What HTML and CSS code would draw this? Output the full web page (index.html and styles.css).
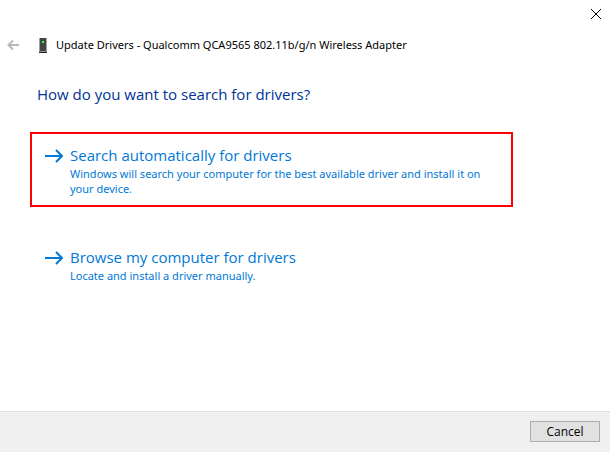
FILE: index.html
```html
<!DOCTYPE html>
<html lang="en">
<head>
    <meta charset="UTF-8">
    <meta name="viewport" content="width=device-width, initial-scale=1.0">
    <title>Update Drivers</title>
    <link rel="stylesheet" href="styles.css">
</head>
<body>

    <div class="titlebar">
        <button class="close" type="button" aria-label="Close">
            <svg width="10" height="10" viewBox="0 0 10 10"><path d="M0 0L10 10M10 0L0 10"/></svg>
        </button>
    </div>

    <header class="header">
        <button class="back" type="button" aria-label="Back" disabled>
            <svg width="13" height="12" viewBox="0 0 13 12"><path d="M12 6H1.500M6 1.500L1.500 6L6 10.500"/></svg>
        </button>
        <svg class="device" width="8" height="15" viewBox="0 0 8 15">
            <rect x="0.500" width="7" height="13" fill="#444"/>
            <rect x="0" y="13.500" width="8" height="1.500" fill="#222"/>
            <rect x="3" y="3" width="2" height="2" fill="#3f3"/>
        </svg>
        <span class="title">Update Drivers - Qualcomm QCA9565 802.11b/g/n Wireless Adapter</span>
    </header>

    <main class="content">
        <h1>How do you want to search for drivers?</h1>

        <button class="option highlighted" type="button">
            <svg class="arrow" width="18" height="14" viewBox="0 0 18 14"><path d="M0 7H17M11 1L17 7L11 13"/></svg>
            <span class="option-text">
                <span class="option-name">Search automatically for drivers</span>
                <span class="option-note">Windows will search your computer for the best available driver and install it on your device.</span>
            </span>
        </button>

        <button class="option" type="button">
            <svg class="arrow" width="18" height="14" viewBox="0 0 18 14"><path d="M0 7H17M11 1L17 7L11 13"/></svg>
            <span class="option-text">
                <span class="option-name">Browse my computer for drivers</span>
                <span class="option-note">Locate and install a driver manually.</span>
            </span>
        </button>
    </main>

    <footer class="footer">
        <button class="cancel" type="button">Cancel</button>
    </footer>

</body>
</html>
```
FILE: styles.css
```css
* {
    box-sizing: border-box;
}
body {
    margin: 0;
    min-height: 100vh;
    display: flex;
    flex-direction: column;
    background-color: #fff;
    color: #000;
    font-family: "Open Sans", "Noto Sans", sans-serif;
    font-size: 12px;
    line-height: 16px;
}
button {
    font: inherit;
    margin: 0;
    padding: 0;
    border: none;
    background: none;
    cursor: pointer;
}
svg {
    display: block;
    flex: none;
    fill: none;
}
.titlebar {
    display: flex;
    justify-content: flex-end;
}
.close {
    display: flex;
    padding: 9px;
    stroke: #000;
}
.header {
    display: flex;
    align-items: center;
    padding: 9px 8px 0 7px;
}
.title,
.option-note {
    font-family: "Noto Sans", "Open Sans", sans-serif;
    font-size: 11px;
}
.back {
    stroke: #b9b9b9;
    stroke-width: 2;
    cursor: default;
}
.device {
    margin: 0 9px 0 19px;
}
.content {
    flex: 1;
    padding: 31px 97px 32px 30px;
}
h1 {
    margin: 0 0 28px;
    padding-left: 7px;
    color: #003399;
    font-size: 15px;
    font-weight: normal;
    line-height: 20px;
}
.option {
    display: flex;
    width: 100%;
    margin-bottom: 27px;
    padding: 11px 13px 9px;
    border: 2px solid transparent;
    color: #0078d7;
    text-align: left;
}
.highlighted {
    border-color: #f00;
}
.arrow {
    margin: 4px 7px 0 0;
    stroke: #0078d7;
    stroke-width: 2;
}
.option-name,
.option-note {
    display: block;
}
.option-name {
    font-size: 15px;
    line-height: 21px;
}
.option-note {
    line-height: 15px;
}
.footer {
    display: flex;
    justify-content: flex-end;
    padding: 9px 10px 10px;
    border-top: 1px solid #dfdfdf;
    background-color: #f0f0f0;
}
.cancel {
    width: 70px;
    height: 21px;
    border: 1px solid #adadad;
    background-color: #e1e1e1;
    line-height: 19px;
}
```
